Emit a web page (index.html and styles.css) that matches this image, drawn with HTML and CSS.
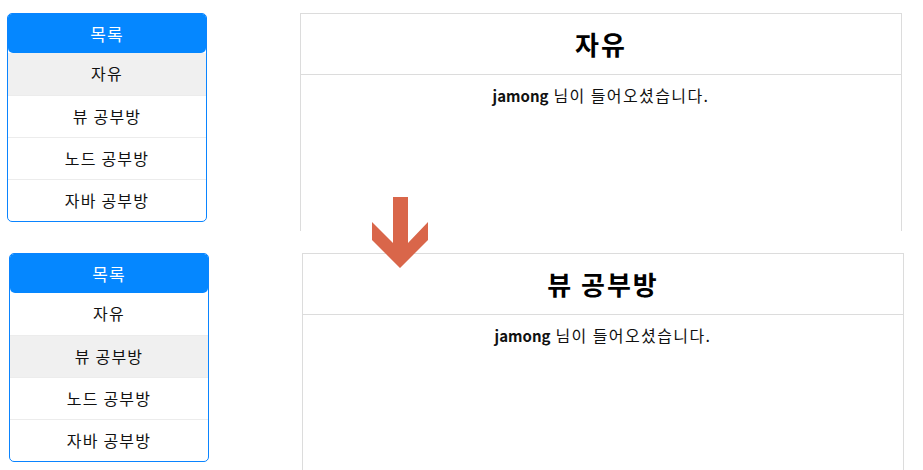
FILE: index.html
```html
<!DOCTYPE html>
<html>
    <head>
        <title>채팅방 목록</title>
        <link rel="stylesheet" href="styles.css">
    </head>
    <body>
        <div class="shot shot-first">
            <ul class="room-list">
                <li class="room-list-title">목록</li>
                <li class="room-item room-active">자유</li>
                <li class="room-item">뷰 공부방</li>
                <li class="room-item">노드 공부방</li>
                <li class="room-item">자바 공부방</li>
            </ul>
            <div class="chat-panel">
                <h2 class="chat-title">자유</h2>
                <p class="chat-message"><b>jamong</b> 님이 들어오셨습니다.</p>
            </div>
        </div>

        <svg class="down-arrow" width="56" height="71" viewBox="0 0 56 71">
            <polygon points="21,0 36,0 36,46 56,25 56,43 28,71 0,43 0,25 21,46" fill="#d9664a"/>
        </svg>

        <div class="shot shot-second">
            <ul class="room-list">
                <li class="room-list-title">목록</li>
                <li class="room-item">자유</li>
                <li class="room-item room-active">뷰 공부방</li>
                <li class="room-item">노드 공부방</li>
                <li class="room-item">자바 공부방</li>
            </ul>
            <div class="chat-panel">
                <h2 class="chat-title">뷰 공부방</h2>
                <p class="chat-message"><b>jamong</b> 님이 들어오셨습니다.</p>
            </div>
        </div>
    </body>
</html>
```

FILE: styles.css
```css
body{
    margin: 0;
    background-color: white;
    font-family: "Noto Sans CJK KR", "Noto Sans", sans-serif;
    color: #111;
    position: relative;
}
.shot{
    display: flex;
    align-items: flex-start;
    overflow: hidden;
    box-sizing: border-box;
}
.shot-first{
    height: 231px;
    padding: 13px 0 0 7px;
}
.shot-second{
    height: 239px;
    margin-top: 9px;
    padding: 13px 0 0 9px;
}
.room-list{
    list-style: none;
    margin: 0;
    padding: 0;
    width: 200px;
    box-sizing: border-box;
    border: 1px solid #0a84ff;
    border-radius: 5px;
    overflow: hidden;
    flex-shrink: 0;
}
.room-list-title{
    height: 39px;
    line-height: 39px;
    text-align: center;
    font-size: 17px;
    letter-spacing: 1px;
    color: white;
    background-color: #0587ff;
    border-radius: 0 0 5px 5px;
}
.room-item{
    height: 41px;
    line-height: 41px;
    text-align: center;
    font-size: 16px;
    letter-spacing: 1.2px;
    border-top: 1px solid #ececec;
}
.room-list-title + .room-item{
    border-top: none;
    height: 42px;
}
.room-active{
    background-color: #f0f0f0;
}
.chat-panel{
    margin-left: 93px;
    width: 602px;
    height: 400px;
    box-sizing: border-box;
    border: 1px solid #dcdcdc;
    flex-shrink: 0;
}
.chat-title{
    margin: 0;
    height: 60px;
    line-height: 60px;
    text-align: center;
    font-size: 26px;
    letter-spacing: 2px;
    font-weight: bold;
    color: #000;
    border-bottom: 1px solid #dcdcdc;
}
.chat-message{
    margin: 8px 0 0 0;
    text-align: center;
    font-size: 16px;
    letter-spacing: 1.4px;
}
.chat-message b{
    font-size: 15px;
    letter-spacing: 0;
}
.down-arrow{
    position: absolute;
    left: 372px;
    top: 197px;
}
```
